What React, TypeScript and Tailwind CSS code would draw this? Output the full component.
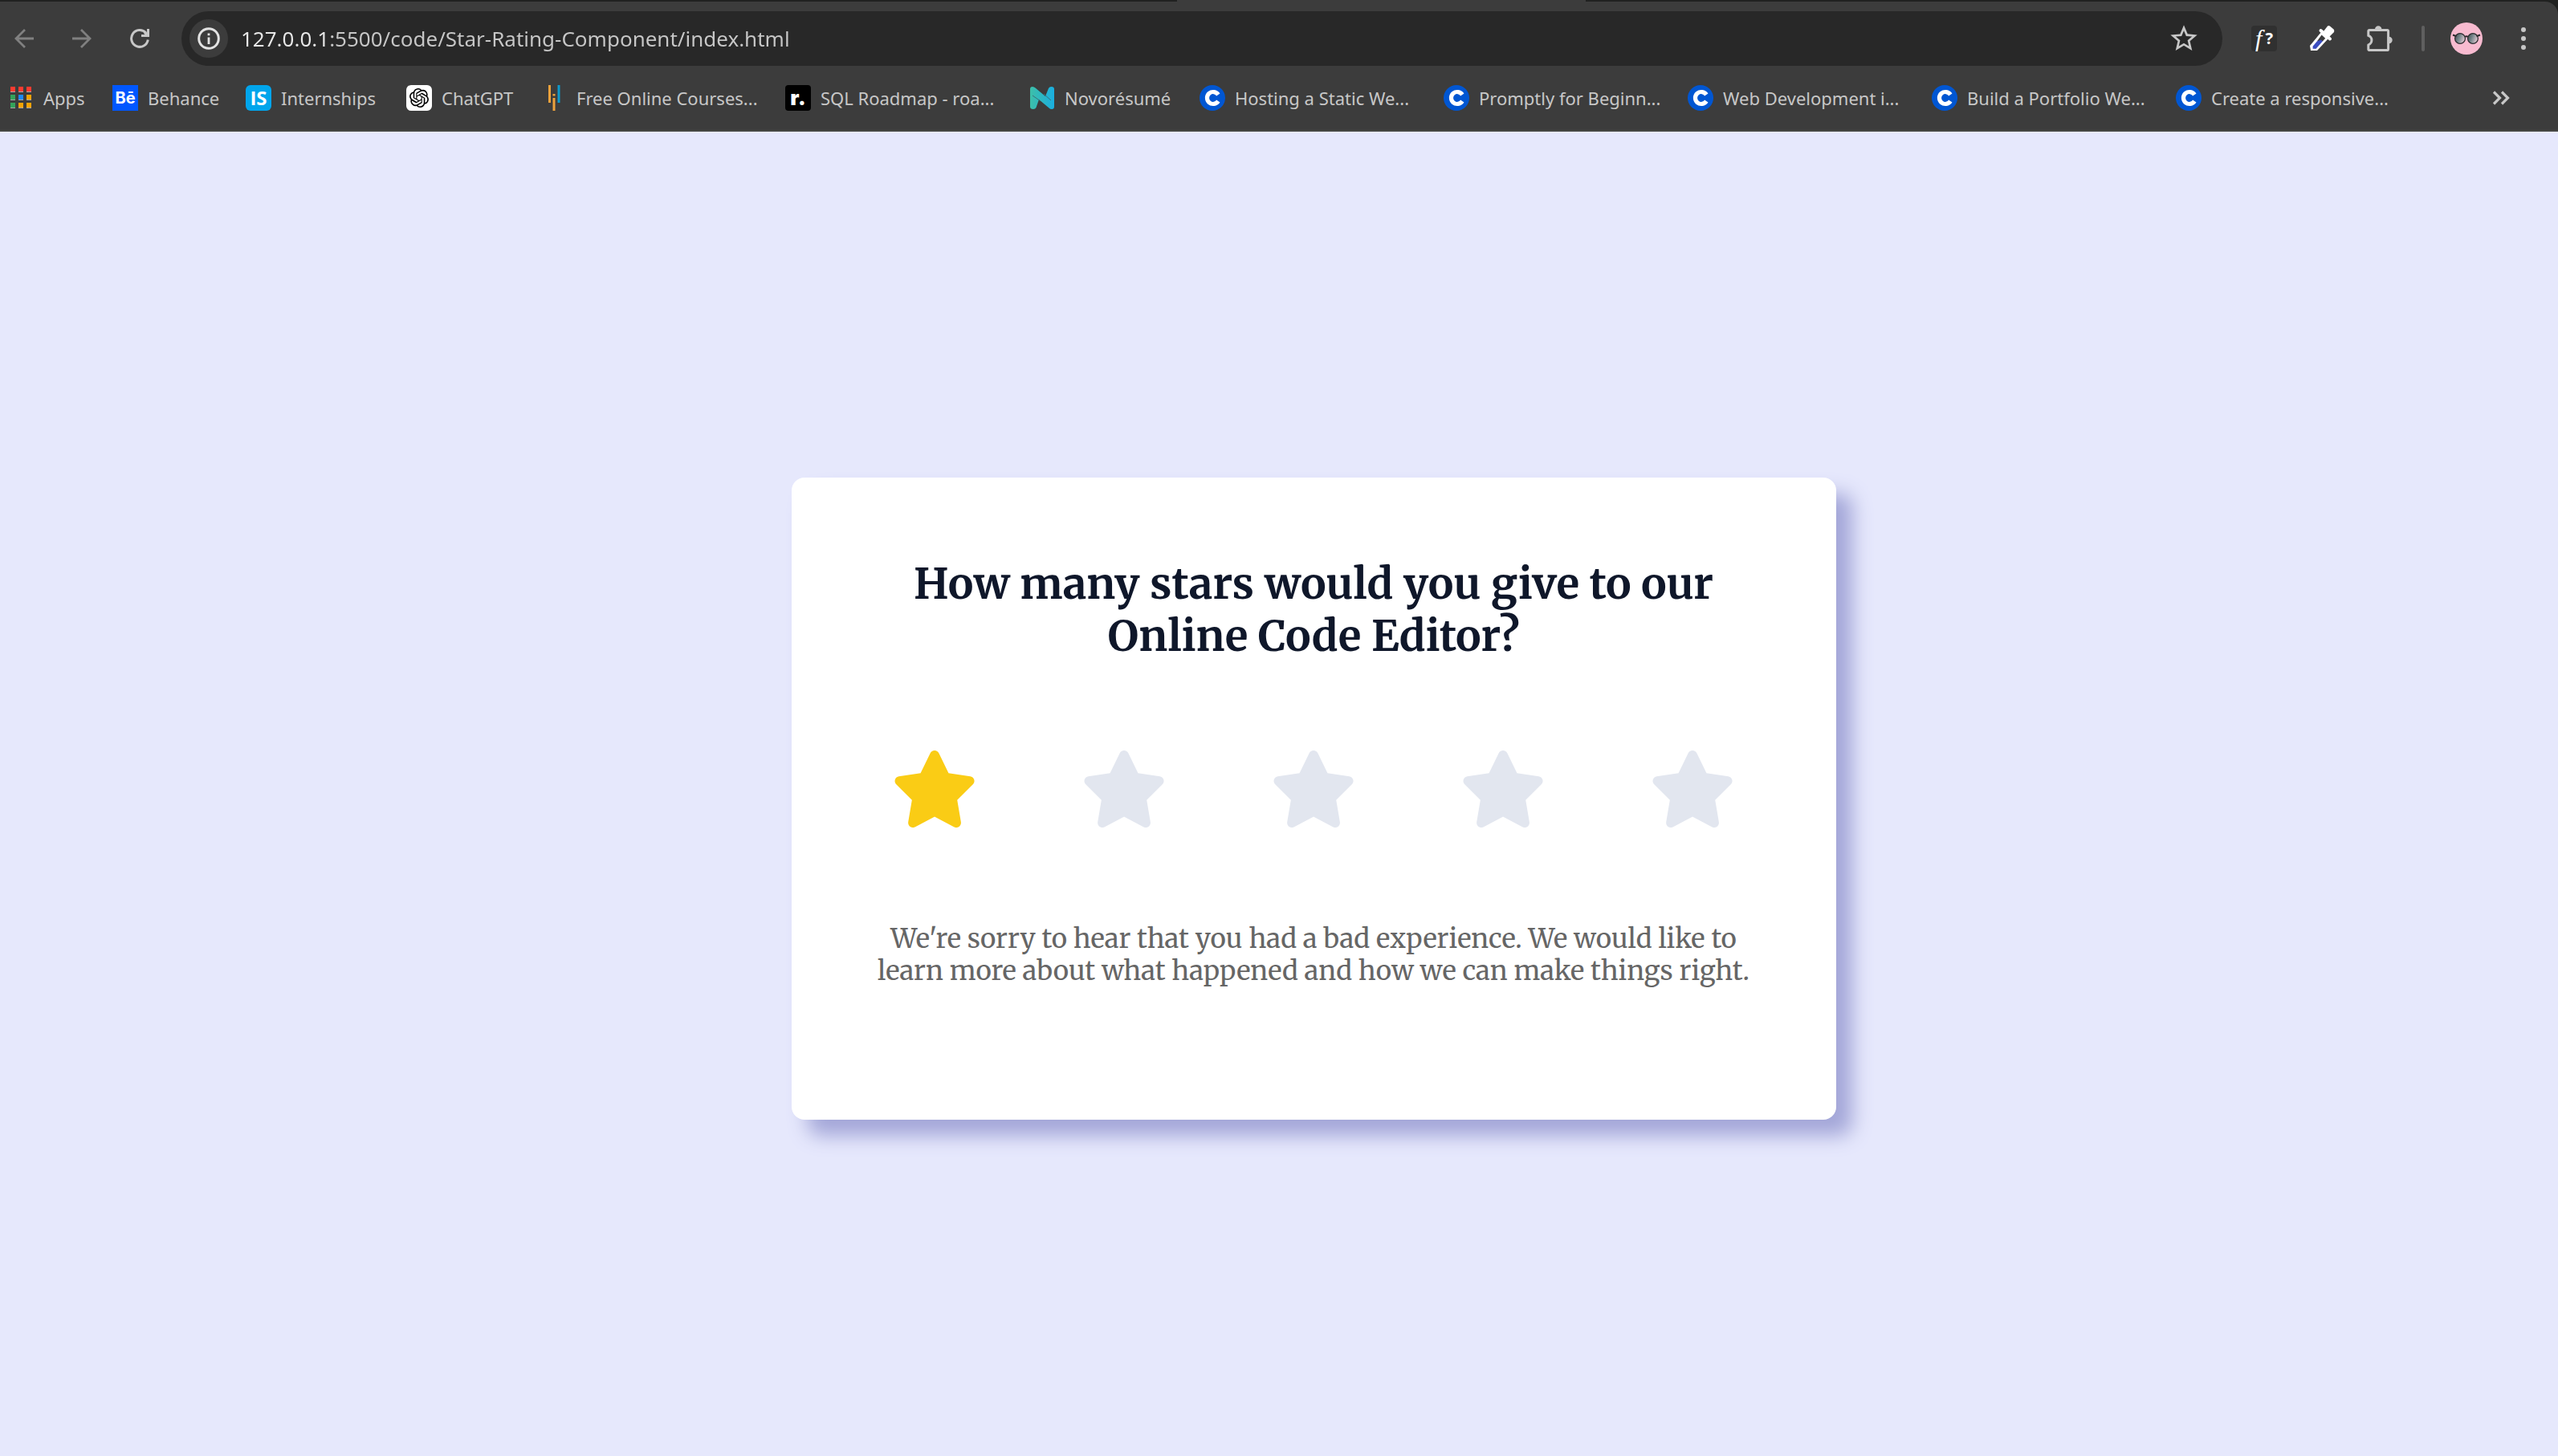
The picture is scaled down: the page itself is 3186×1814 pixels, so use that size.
import { useState, type ReactNode } from 'react';
import { FaStar } from 'react-icons/fa6';
import { MdStarBorder } from 'react-icons/md';
import { SiOpenai } from 'react-icons/si';

function ArrowIcon({ className }: { className?: string }) {
  return (
    <svg viewBox="0 0 24 24" className={`size-6 ${className ?? ''}`} fill="none" stroke="#808080" strokeWidth="2.8">
      <path d="M24 12H2M13 1L2 12l11 11" />
    </svg>
  );
}

function ReloadIcon() {
  return (
    <svg viewBox="0 0 24 24" className="size-6" fill="none">
      <path d="M22.3 13.5A10.4 10.4 0 1 1 19.6 4.8" stroke="#c7c7c7" strokeWidth="3" />
      <path d="M24 0v10H14V7h4.5L17 5.5 19.5 3 21 4.5V0z" fill="#c7c7c7" />
    </svg>
  );
}

function InfoIcon() {
  return (
    <svg viewBox="0 0 28 28" className="size-7" fill="none">
      <circle cx="14" cy="14" r="12.3" stroke="#e3e3e3" strokeWidth="3" />
      <path d="M12.6 12.6h2.8v8.4h-2.8zM12.6 7.4h2.8v2.8h-2.8z" fill="#e3e3e3" />
    </svg>
  );
}

function DropperIcon() {
  return (
    <svg viewBox="0 0 32 32" className="size-8" fill="none">
      <path d="M1 25L15 8l9 8L10 31H2z" fill="#fff" />
      <path d="M15.6 11.5l4.600 4.200-3.400 3.700h-7z" fill="#3c3c3c" />
      <path d="M9.800 19.400l5-2 2 2-8.200 9.400H4.600v-3z" fill="#3a4cc0" />
      <path d="M14.500 6l11.500 10.500" stroke="#fff" strokeWidth="4" strokeLinecap="round" />
      <path d="M18 7l5-6.500q1.500-1 3.500.5l4 3.500q1.500 2 0 4l-6 6z" fill="#fff" />
    </svg>
  );
}

function PuzzleIcon() {
  return (
    <svg viewBox="0 0 32 32" className="size-8">
      <path
        d="M3.200 5.400h22Q26.600 5.400 26.600 6.800v22.400q0 1.400-1.400 1.400H3.200q-1.400 0-1.400-1.400v-5.400a6 6 0 0 0 0-11.400V6.800q0-1.400 1.400-1.400z"
        fill="none"
        stroke="#c7c7c7"
        strokeWidth="3"
        strokeLinejoin="round"
      />
      <path d="M10 4.500a4.200 4.200 0 0 1 8.400 0zM27.500 13.800a4.200 4.200 0 0 1 0 8.400z" fill="#c7c7c7" />
    </svg>
  );
}

function Avatar() {
  return (
    <svg viewBox="0 0 40 40" className="size-10">
      <defs>
        <linearGradient id="lens" x1="0" y1="0" x2="1" y2="0.4">
          <stop offset="0" stopColor="#3f474c" />
          <stop offset="0.5" stopColor="#76868b" />
          <stop offset="1" stopColor="#d9c3cd" />
        </linearGradient>
      </defs>
      <circle cx="20" cy="20" r="20" fill="#f8bbd0" />
      <circle cx="12" cy="20" r="6.400" fill="url(#lens)" stroke="#2b2b2e" strokeWidth="1.200" />
      <circle cx="28" cy="20" r="6.400" fill="url(#lens)" stroke="#2b2b2e" strokeWidth="1.200" />
      <path d="M3 15.500l4.500 1.800M37 15.500l-4.500 1.800M18 18q2-1.600 4 0" stroke="#2b2b2e" strokeWidth="2" fill="none" />
    </svg>
  );
}

const appColors = ['#ff3b30', '#ff3b30', '#ff3b30', '#34a25a', '#1e88f5', '#f5a300', '#34a25a', '#f5a300', '#f5a300'];

function AppsIcon() {
  return (
    <svg viewBox="0 0 32 32" className="size-8">
      {appColors.map((c, i) => {
        const x = 3 + (i % 3) * 10;
        const y = 2 + Math.floor(i / 3) * 10;
        return (
          <g key={i}>
            <rect x={x} y={y} width="6" height="7" fill="#a5a5a5" />
            <rect x={x} y={y} width="6" height="6" fill={c} />
          </g>
        );
      })}
    </svg>
  );
}

function BarsIcon() {
  return (
    <svg viewBox="0 0 32 32" className="size-8">
      <path d="M9 0h3v22H9zM14.500 16h3v16h-3zM14.500 11h3v2.500h-3z" fill="#eda23c" />
      <path d="M20.500 0h3v22h-3z" fill="#0d9bcd" />
    </svg>
  );
}

function NovoIcon() {
  return (
    <svg viewBox="0 0 32 32" className="size-8">
      <defs>
        <linearGradient id="novo" x1="0" x2="1">
          <stop offset="0" stopColor="#3dbfa8" />
          <stop offset="1" stopColor="#1aaee0" />
        </linearGradient>
      </defs>
      <path
        d="M1 5Q1 2 4 2q2 0 3.500 1.500L20 14l4-10q1-2 3.500-2Q31 2 31 5v22q0 3-3 3-2 0-3.500-1.500L12 18 8.500 28q-1 2-3.500 2-4 0-4-3z"
        fill="url(#novo)"
      />
      <path d="M4 13l10 7M18 11l9 8" stroke="#3c6f78" strokeWidth="1" />
    </svg>
  );
}

function CourseIcon() {
  return (
    <svg viewBox="0 0 32 32" className="size-8">
      <circle cx="16" cy="16" r="16" fill="#0056d2" />
      <path d="M23.300 12A7.500 7.500 0 1 0 23.300 20" stroke="#fff" strokeWidth="5.200" fill="none" />
    </svg>
  );
}

const bookmarks: { label: string; width: string; icon: ReactNode }[] = [
  { label: 'Apps', width: 'w-[130px]', icon: <AppsIcon /> },
  {
    label: 'Behance',
    width: 'w-[166px]',
    icon: <span className="flex size-8 items-center justify-center bg-[#0057ff] font-['Inter'] text-[20px] leading-none font-bold text-white">Bē</span>,
  },
  {
    label: 'Internships',
    width: 'w-[200px]',
    icon: <span className="flex size-8 items-center justify-center rounded-md bg-[#00a5ec] font-['Open_Sans'] text-[24px] leading-none font-bold text-white">IS</span>,
  },
  {
    label: 'ChatGPT',
    width: 'w-[168px]',
    icon: (
      <span className="flex size-8 items-center justify-center rounded-md bg-white">
        <SiOpenai className="size-6 text-black" />
      </span>
    ),
  },
  { label: 'Free Online Courses...', width: 'w-[304px]', icon: <BarsIcon /> },
  {
    label: 'SQL Roadmap - roa...',
    width: 'w-[304px]',
    icon: <span className="flex size-8 items-center justify-center rounded bg-black font-['Inter'] text-[26px] leading-none font-black text-white">r.</span>,
  },
  { label: 'Novorésumé', width: 'w-[212px]', icon: <NovoIcon /> },
  { label: 'Hosting a Static We...', width: 'w-[304px]', icon: <CourseIcon /> },
  { label: 'Promptly for Beginn...', width: 'w-[304px]', icon: <CourseIcon /> },
  { label: 'Web Development i...', width: 'w-[304px]', icon: <CourseIcon /> },
  { label: 'Build a Portfolio We...', width: 'w-[304px]', icon: <CourseIcon /> },
  { label: 'Create a responsive...', width: 'w-[304px]', icon: <CourseIcon /> },
];

function Toolbar() {
  const [url, setUrl] = useState('127.0.0.1:5500/code/Star-Rating-Component/index.html');
  return (
    <div className="flex items-center pt-3 pr-10 pl-[18px]">
      <div className="mr-10 flex items-center gap-12">
        <button aria-label="Back"><ArrowIcon /></button>
        <button aria-label="Forward"><ArrowIcon className="rotate-180" /></button>
        <button aria-label="Reload"><ReloadIcon /></button>
      </div>
      <div className="flex h-[68px] flex-1 items-center rounded-full bg-[#282828] pr-7 pl-[10px]">
        <button aria-label="Site information" className="flex size-12 items-center justify-center rounded-full bg-[#3c3c3c]">
          <InfoIcon />
        </button>
        <input
          aria-label="Address"
          value={url}
          onChange={(e) => setUrl(e.target.value)}
          className="ml-4 flex-1 bg-[linear-gradient(90deg,#e8e8e8_110px,#c7c7c7_110px)] bg-clip-text text-[26px] leading-9 text-transparent outline-none"
        />
        <button aria-label="Bookmark this page"><MdStarBorder className="size-10 text-[#c7c7c7]" /></button>
      </div>
      <div className="ml-9 flex items-center gap-10">
        <button aria-label="Font finder" className="flex size-8 items-center justify-center gap-1 rounded bg-[#303030] font-['Liberation_Serif'] text-[30px] leading-none text-white">
          <i>f</i>
          <span className="font-['Noto_Sans'] text-[20px] font-bold">?</span>
        </button>
        <button aria-label="Color picker"><DropperIcon /></button>
        <button aria-label="Extensions"><PuzzleIcon /></button>
      </div>
      <div className="ml-9 h-8 w-1 rounded-full bg-[#5f5f5f]" />
      <button aria-label="Profile" className="ml-8"><Avatar /></button>
      <button aria-label="Menu" className="ml-12 flex flex-col gap-[5px]">
        <span className="size-1.5 rounded-full bg-[#c7c7c7]" />
        <span className="size-1.5 rounded-full bg-[#c7c7c7]" />
        <span className="size-1.5 rounded-full bg-[#c7c7c7]" />
      </button>
    </div>
  );
}

function BookmarksBar() {
  return (
    <nav aria-label="Bookmarks" className="flex h-20 items-center pr-[60px] pl-[10px]">
      {bookmarks.map((b) => (
        <div key={b.label} className={`shrink-0 ${b.width}`}>
          <a href="#" className="flex items-center gap-3 text-[22px] leading-8 whitespace-nowrap text-[#c7c7c7]">
            {b.icon}
            {b.label}
          </a>
        </div>
      ))}
      <button aria-label="More bookmarks" className="ml-auto">
        <svg viewBox="0 0 22 18" className="h-[18px] w-[22px]" fill="none" stroke="#c7c7c7" strokeWidth="3.200">
          <path d="M2 1.500L9.500 9 2 16.500M12 1.500L19.500 9 12 16.500" />
        </svg>
      </button>
    </nav>
  );
}

function RatingCard() {
  const [rating, setRating] = useState(1);
  return (
    <section className="w-full max-w-[1301px] rounded-2xl bg-white px-[104px] pt-[100px] pb-[165px] text-center font-['Merriweather','Noto_Serif',serif] shadow-[20px_20px_24px_#a3a6d8]">
      <h1 className="text-[53px] leading-[65px] font-bold text-[#0f172a]">
        How many stars would you give to our Online Code Editor?
      </h1>
      <div className="mt-[110px] flex justify-center gap-32">
        {[1, 2, 3, 4, 5].map((n) => (
          <button key={n} aria-label={`${n} of 5 stars`} aria-pressed={n <= rating} onClick={() => setRating(n)}>
            <FaStar className={`h-24 w-[108px] ${n <= rating ? 'text-[#facc15]' : 'text-[#e2e6ef]'}`} />
          </button>
        ))}
      </div>
      <p className="mt-[119px] text-[33px] leading-10 text-[#666666]">
        We're sorry to hear that you had a bad experience. We would like to learn more about what happened and how we can
        make things right.
      </p>
    </section>
  );
}

export default function App() {
  return (
    <div className="flex min-h-screen flex-col bg-[#e6e8fc] font-['Noto_Sans','Open_Sans',sans-serif]">
      <header className="border-b-2 border-[#464743] bg-[#202120]">
        <div className="flex h-0.5">
          <div className="ml-[46%] w-[16%] bg-[#3c3c3c]" />
        </div>
        <div className="rounded-tr-2xl bg-[#3c3c3c]">
          <Toolbar />
          <BookmarksBar />
        </div>
      </header>
      <main className="flex flex-1 items-center justify-center pt-3 pl-[86px]">
        <RatingCard />
      </main>
    </div>
  );
}
